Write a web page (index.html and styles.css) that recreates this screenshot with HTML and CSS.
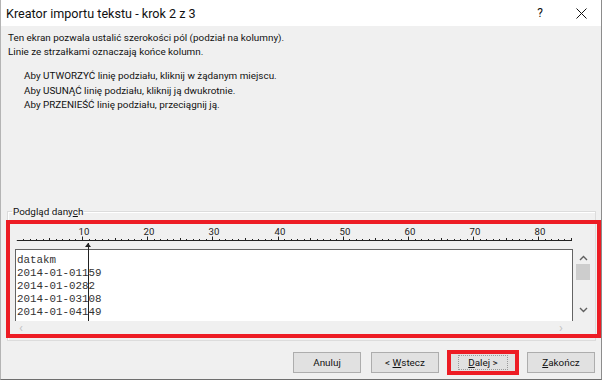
FILE: index.html
```html
<!DOCTYPE html>
<html lang="pl">
<head>
  <meta charset="UTF-8">
  <title>Kreator importu tekstu - krok 2 z 3</title>
  <link rel="stylesheet" href="styles.css">
</head>
<body>
  <div class="dialog">
    <div class="titlebar">
      <span class="title">Kreator importu tekstu - krok 2 z 3</span>
      <span class="help">?</span>
      <span class="close">
        <svg width="11" height="11" viewBox="0 0 11 11"><path d="M0.5 0.5 L10.5 10.5 M10.5 0.5 L0.5 10.5" stroke="#111" stroke-width="1" fill="none"/></svg>
      </span>
    </div>

    <div class="content">
      <p class="intro">Ten ekran pozwala ustalić szerokości pól (podział na kolumny).<br>Linie ze strzałkami oznaczają końce kolumn.</p>
      <ul class="hints">
        <li>Aby UTWORZYĆ linię podziału, kliknij w żądanym miejscu.</li>
        <li>Aby USUNĄĆ linię podziału, kliknij ją dwukrotnie.</li>
        <li>Aby PRZENIEŚĆ linię podziału, przeciągnij ją.</li>
      </ul>

      <fieldset class="group">
        <legend>Podgląd dany<u>c</u>h</legend>
        <div class="preview">
          <svg class="ruler" id="ruler" width="587" height="25"></svg>
          <div class="preview-row">
            <div class="data-col">
              <div class="data">datakm<br>2014-01-01159<br>2014-01-0282<br>2014-01-03108<br>2014-01-04149</div>
              <div class="hscroll"><span>&lsaquo;</span><span>&rsaquo;</span></div>
            </div>
            <div class="vscroll">
              <svg width="9" height="6" viewBox="0 0 9 6"><path d="M1 5 L4.5 1.5 L8 5" stroke="#606060" stroke-width="1.4" fill="none"/></svg>
              <div class="thumb"></div>
              <svg class="down" width="9" height="6" viewBox="0 0 9 6"><path d="M1 1 L4.5 4.5 L8 1" stroke="#606060" stroke-width="1.4" fill="none"/></svg>
            </div>
          </div>
          <div class="breakline"></div>
        </div>
      </fieldset>

      <div class="buttons">
        <button class="btn">Anuluj</button>
        <button class="btn">&lt; <u>W</u>stecz</button>
        <button class="btn btn-default"><span class="focus"><u>D</u>alej &gt;</span></button>
        <button class="btn"><u>Z</u>akończ</button>
      </div>
    </div>
  </div>

  <script>
    // ruler: one tick per character, longer every 5 and 10
    const ruler = document.getElementById("ruler");
    const ns = "http://www.w3.org/2000/svg";
    const x0 = 6.8, step = 6.52, base = 16.5;
    let d = "M" + x0 + " " + base + " H" + (x0 + 85 * step + 1);
    for (let i = 1; i <= 85; i++) {
      const x = Math.round(x0 + i * step) + 0.5;
      const h = i % 10 === 0 ? 4 : (i % 5 === 0 ? 2.5 : 1.5);
      d += " M" + x + " " + base + " V" + (base - h);
      if (i % 10 === 0) {
        const t = document.createElementNS(ns, "text");
        t.setAttribute("x", x + 1.5);
        t.setAttribute("y", 11);
        t.setAttribute("text-anchor", "middle");
        t.textContent = i;
        ruler.appendChild(t);
      }
    }
    const path = document.createElementNS(ns, "path");
    path.setAttribute("d", d);
    path.setAttribute("stroke", "#222");
    path.setAttribute("fill", "none");
    ruler.appendChild(path);
  </script>
</body>
</html>
```

FILE: styles.css
```css
body {
  margin: 0;
  background-color: #fff;
  font-family: Roboto, "Noto Sans", sans-serif;
  font-size: 9.9px;
  color: #111;
}
.dialog {
  width: 600px;
  height: 379px;
  border-left: 1px solid #b4b4b4;
  border-right: 1px solid #8c8c8c;
  border-bottom: 1px solid #6e6e6e;
  background-color: #f0f0f0;
  display: flex;
  flex-direction: column;
}
.titlebar {
  height: 26px;
  background-color: #fff;
  display: flex;
  align-items: center;
  padding-left: 5px;
  font-size: 12.6px;
}
.title {
  flex: 1;
}
.help {
  width: 12px;
  text-align: center;
  font-size: 12px;
  margin-right: 30px;
}
.close {
  width: 11px;
  height: 11px;
  margin-right: 14px;
  margin-top: 1px;
}
.close svg {
  display: block;
}
.content {
  flex: 1;
  display: flex;
  flex-direction: column;
}
.intro {
  margin: 5px 0 0 7px;
  line-height: 14px;
}
.hints {
  list-style: none;
  margin: 10px 0 0 23px;
  padding: 0;
  line-height: 14.5px;
}
.group {
  margin: 93px 5px 0 6px;
  padding: 0;
  border: 1px solid #dcdcdc;
  box-shadow: inset 1px 1px 0 #fff;
  min-width: 0;
}
.group legend {
  margin-left: 4px;
  padding: 0 1px;
  line-height: 12px;
}
.preview {
  position: relative;
  margin: 6px -2px 6px 2px;
  height: 110px;
  outline: 4px solid #ed1c24;
}
.ruler {
  display: block;
  font-family: Roboto, "Noto Sans", sans-serif;
  font-size: 9.6px;
  fill: #222;
}
.preview-row {
  display: flex;
}
.data-col {
  margin-left: 5px;
  width: 558px;
}
.data {
  height: 67px;
  padding-top: 4px;
  background-color: #fff;
  border: 1px solid #646464;
  border-bottom: none;
  font-family: "Liberation Mono", monospace;
  font-size: 10.85px;
  line-height: 13px;
  color: #333;
  padding-left: 1px;
}
.hscroll {
  height: 13px;
  display: flex;
  justify-content: space-between;
  align-items: center;
  padding: 0 10px 0 4px;
  color: #c2c2c2;
  font-size: 13px;
}
.vscroll {
  width: 18px;
  margin-left: 1px;
  display: flex;
  flex-direction: column;
  align-items: center;
  padding-top: 6px;
}
.thumb {
  width: 14px;
  height: 16px;
  margin-top: 3px;
  background-color: #cdcdcd;
}
.down {
  margin-top: 27px;
}
.breakline {
  position: absolute;
  left: 78px;
  top: 19px;
  width: 1px;
  height: 78px;
  background-color: #222;
}
.breakline::before {
  content: "";
  position: absolute;
  left: -3px;
  top: 0;
  border-left: 3.5px solid transparent;
  border-right: 3.5px solid transparent;
  border-bottom: 4px solid #222;
}
.buttons {
  display: flex;
  justify-content: flex-end;
  gap: 10px;
  margin-top: 11px;
  padding-right: 6px;
}
.btn {
  width: 68px;
  height: 21px;
  padding: 0;
  background-color: #e1e1e1;
  border: 1px solid #adadad;
  border-radius: 0;
  font-family: Roboto, "Noto Sans", sans-serif;
  font-size: 9.9px;
  color: #111;
}
.btn-default {
  border-color: #0078d7;
  outline: 4px solid #ed1c24;
  outline-offset: -2px;
}
.focus {
  display: inline-block;
  padding: 1px 9px;
  border: 1px dotted #999;
}
```
